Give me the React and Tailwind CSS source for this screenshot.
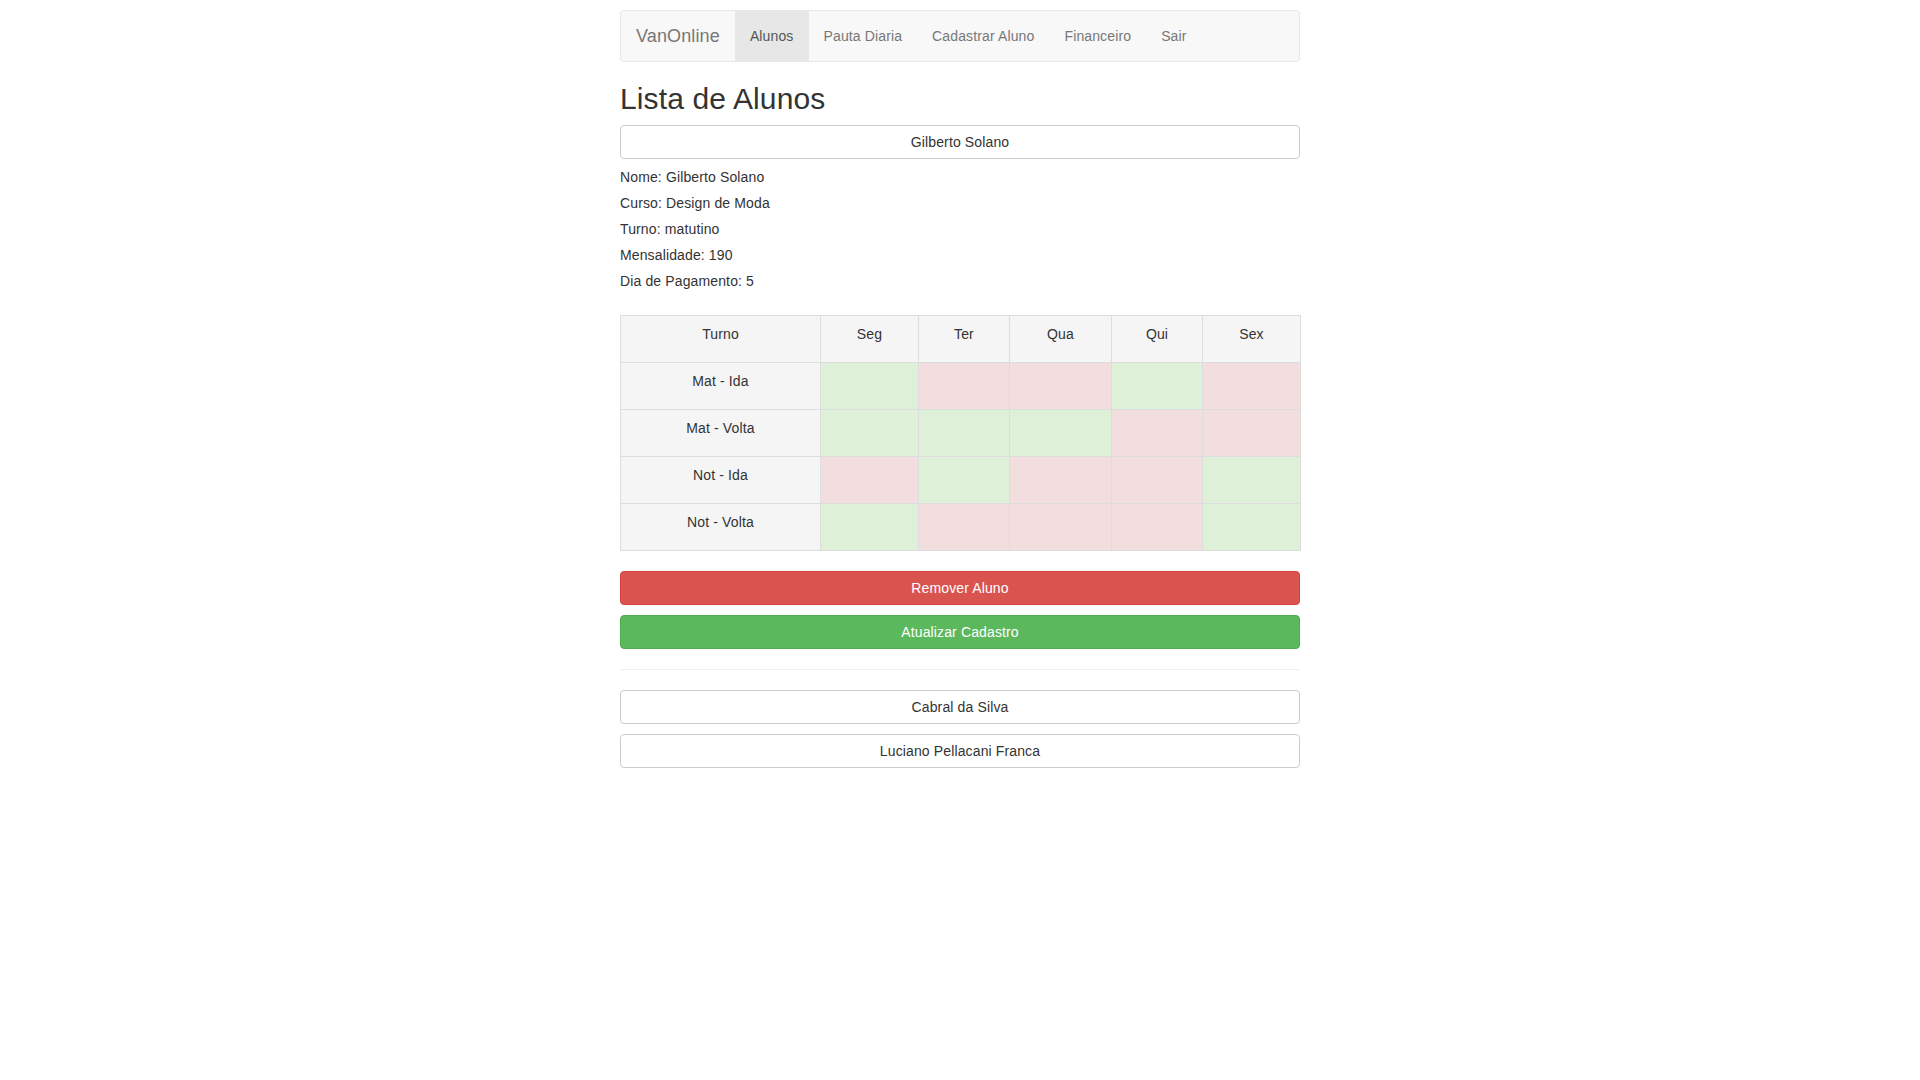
import { useState } from "react";

const dias = ["Seg", "Ter", "Qua", "Qui", "Sex"];
const larguras = ["w-[98px]", "w-[91px]", "w-[102px]", "w-[91px]", "w-[98px]"];

const pauta = [
  { turno: "Mat - Ida", dias: [true, false, false, true, false] },
  { turno: "Mat - Volta", dias: [true, true, true, false, false] },
  { turno: "Not - Ida", dias: [false, true, false, false, true] },
  { turno: "Not - Volta", dias: [true, false, false, false, true] },
];

const links = ["Alunos", "Pauta Diaria", "Cadastrar Aluno", "Financeiro", "Sair"];

export default function App() {
  const [ativo] = useState("Alunos");

  return (
    <div className="min-h-screen bg-white text-[14px] tracking-[0.13px] text-[#333] font-['Liberation_Sans',Arial,sans-serif]">
      <div className="w-[680px] mx-auto pt-[10px]">

        {/* NAVBAR */}
        <nav className="flex h-[52px] bg-[#f8f8f8] border border-[#e7e7e7] rounded-[4px]">
          <span className="px-[15px] py-[15px] text-[18px] leading-[20px] text-[#777]">
            VanOnline
          </span>
          {links.map((l) => (
            <a
              key={l}
              className={
                l === ativo
                  ? "px-[15px] py-[15px] leading-[20px] bg-[#e7e7e7] text-[#555]"
                  : "px-[15px] py-[15px] leading-[20px] text-[#777]"
              }
            >
              {l}
            </a>
          ))}
        </nav>

        <h2 className="mt-[20px] mb-[10px] text-[30px] leading-[33px] font-normal text-[#333]">
          Lista de Alunos
        </h2>

        <button className="w-full h-[34px] bg-white border border-[#ccc] rounded-[4px] text-[#333]">
          Gilberto Solano
        </button>

        {/* DADOS */}
        <div className="mt-[5px]">
          <div className="leading-[26px]">Nome: Gilberto Solano</div>
          <div className="leading-[26px]">Curso: Design de Moda</div>
          <div className="leading-[26px]">Turno: matutino</div>
          <div className="leading-[26px]">Mensalidade: 190</div>
          <div className="leading-[26px]">Dia de Pagamento: 5</div>
        </div>

        {/* PAUTA */}
        <table className="w-full mt-[21px] border-collapse table-fixed">
          <thead>
            <tr>
              <th className="w-[200px] h-[47px] align-top pt-[8px] px-[8px] border border-[#ddd] bg-[#f5f5f5] font-normal leading-[20px]">
                Turno
              </th>
              {dias.map((d, i) => (
                <th
                  key={d}
                  className={`${larguras[i]} h-[47px] align-top pt-[8px] px-[8px] border border-[#ddd] bg-[#f5f5f5] font-normal leading-[20px]`}
                >
                  {d}
                </th>
              ))}
            </tr>
          </thead>
          <tbody>
            {pauta.map((r) => (
              <tr key={r.turno}>
                <td className="h-[47px] align-top pt-[8px] px-[8px] border border-[#ddd] bg-[#f5f5f5] text-center leading-[20px]">
                  {r.turno}
                </td>
                {r.dias.map((v, i) => (
                  <td
                    key={i}
                    className={
                      v
                        ? "h-[47px] border border-[#ddd] bg-[#dff0d8]"
                        : "h-[47px] border border-[#ddd] bg-[#f2dede]"
                    }
                  ></td>
                ))}
              </tr>
            ))}
          </tbody>
        </table>

        <button className="w-full h-[34px] mt-[20px] bg-[#d9534f] border border-[#d43f3a] rounded-[4px] text-white">
          Remover Aluno
        </button>
        <button className="w-full h-[34px] mt-[10px] bg-[#5cb85c] border border-[#4cae4c] rounded-[4px] text-white">
          Atualizar Cadastro
        </button>

        <hr className="mt-[20px] mb-[20px] border-0 border-t border-[#eee]" />

        <button className="w-full h-[34px] bg-white border border-[#ccc] rounded-[4px] text-[#333]">
          Cabral da Silva
        </button>
        <button className="w-full h-[34px] mt-[10px] bg-white border border-[#ccc] rounded-[4px] text-[#333]">
          Luciano Pellacani Franca
        </button>

      </div>
    </div>
  );
}
